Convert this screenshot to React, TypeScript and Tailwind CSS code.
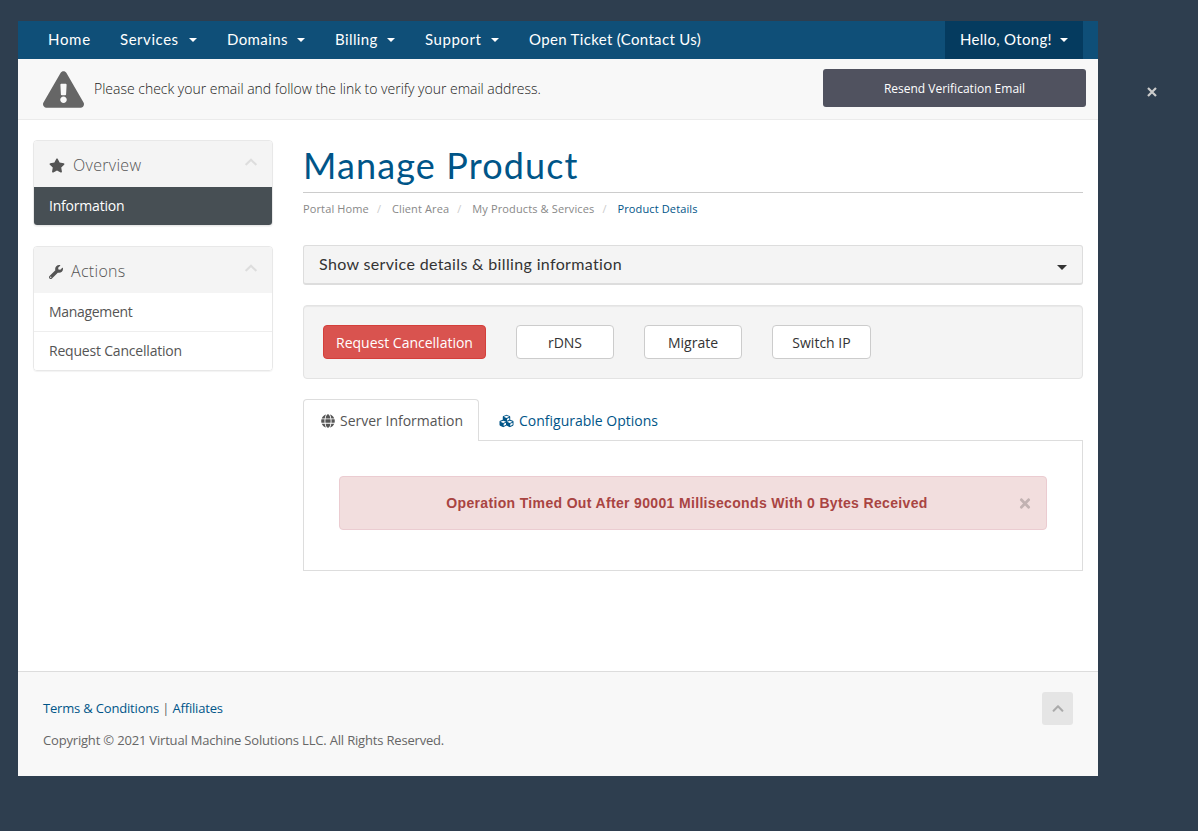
import { FaChevronUp, FaCubes, FaExclamationTriangle, FaGlobe, FaStar, FaTimes, FaWrench } from "react-icons/fa"

const navItems = [
    { label: "Home", dropdown: false, style: "w-[72px] tracking-[0.7px]" },
    { label: "Services", dropdown: true, style: "w-[107px] tracking-[0.55px]" },
    { label: "Domains", dropdown: true, style: "w-[108px] tracking-[0.4px]" },
    { label: "Billing", dropdown: true, style: "w-[90px] tracking-[0.4px]" },
    { label: "Support", dropdown: true, style: "w-[104px] tracking-[0.55px]" },
    { label: "Open Ticket (Contact Us)", dropdown: false, style: "w-[202px] tracking-[0.33px]" },
]

const sidebar = [
    {
        title: "Overview",
        icon: FaStar,
        iconStyle: "h-[15px] w-4",
        links: [{ label: "Information", style: "h-[38px] bg-[#474f54] text-white tracking-[-0.2px]" }],
    },
    {
        title: "Actions",
        icon: FaWrench,
        iconStyle: "h-[14px] w-[14px]",
        links: [
            { label: "Management", style: "h-[38px] bg-white text-[#555] tracking-[-0.32px]" },
            { label: "Request Cancellation", style: "h-[39px] border-t border-[#eee] bg-white text-[#555] tracking-[-0.2px]" },
        ],
    },
]

const breadcrumbs = ["Portal Home", "Client Area", "My Products & Services"]

const serviceActions = [
    { label: "Request Cancellation", style: "w-[163px] bg-[#d9534f] border-[#d43f3a] text-white" },
    { label: "rDNS", style: "w-[98px] bg-white border-[#ccc] text-[#333]" },
    { label: "Migrate", style: "w-[98px] bg-white border-[#ccc] text-[#333]" },
    { label: "Switch IP", style: "w-[99px] bg-white border-[#ccc] text-[#333]" },
]

function Caret() {
    return <span className="mt-px inline-block h-0 w-0 border-x-4 border-t-4 border-x-transparent border-t-current" />
}

function NavBar() {
    return (
        <nav className="flex h-[38px] bg-[#0f4f78] px-[15px] font-['Lato',sans-serif] text-[15px] leading-[36px] text-white">
            {navItems.map((item) => (
                <a key={item.label} className={`flex items-center justify-between whitespace-nowrap px-[15px] pb-px ${item.style}`}>
                    <span className="-mt-px">{item.label}</span>
                    {item.dropdown && <Caret />}
                </a>
            ))}
            <a className="ml-auto flex w-[138px] items-center justify-between whitespace-nowrap bg-[#053b5f] px-[15px] pb-px tracking-[0.3px]">
                <span className="-mt-px">Hello, Otong!</span>
                <Caret />
            </a>
        </nav>
    )
}

function VerifyBanner() {
    return (
        <div className="flex h-[61px] items-start border-b border-[#ebebeb] bg-[#f8f8f8] pl-[25px] pr-3 pt-[10px]">
            <FaExclamationTriangle className="mt-[2px] h-[37px] w-[41px] text-[#666]" />
            <p className="ml-[10px] mt-[10px] text-sm font-light tracking-[-0.01px] text-[#222]">
                Please check your email and follow the link to verify your email address.
            </p>
            <button className="ml-auto h-[38px] w-[263px] rounded-[3px] bg-[#50525f] pt-[2px] text-xs text-white">
                Resend Verification Email
            </button>
        </div>
    )
}

function Sidebar() {
    return (
        <aside className="flex w-[240px] flex-col gap-5">
            {sidebar.map((panel) => (
                <div key={panel.title} className="overflow-hidden rounded-[4px] border border-[#e8e8e8] shadow-[0_1px_1px_rgba(0,0,0,0.05)]">
                    <div className="flex h-[46px] items-center bg-[#f4f4f4] px-[15px] text-[#555]">
                        <panel.icon className={`mt-[3px] ${panel.iconStyle}`} />
                        <h3 className="ml-2 mt-[2px] text-base font-light tracking-[0.3px]">{panel.title}</h3>
                        <FaChevronUp className="ml-auto mb-[5px] h-[14px] w-[12px] text-[#ddd]" />
                    </div>
                    {panel.links.map((link) => (
                        <a key={link.label} className={`flex items-center px-[15px] text-sm ${link.style}`}>
                            {link.label}
                        </a>
                    ))}
                </div>
            ))}
        </aside>
    )
}

function ProductTabs() {
    return (
        <div className="mt-5">
            <div className="flex h-[42px] items-stretch text-sm">
                <a className="z-10 flex w-[176px] items-center rounded-t-[4px] border border-b-0 border-[#ddd] bg-white pl-[17px] text-[#555]">
                    <FaGlobe className="mr-[5px] h-[14px] w-[14px]" />
                    Server Information
                </a>
                <a className="flex items-center pl-5 pt-[2px] text-[#058]">
                    <FaCubes className="mr-[5px] h-[14px] w-[15px]" />
                    Configurable Options
                </a>
            </div>
            <div className="-mt-px h-[131px] border border-[#ddd] p-[35px]">
                <div className="flex h-[54px] items-center rounded-[4px] border border-[#ebccd1] bg-[#f2dede] pl-[15px] pr-[15px] text-[#a94442]">
                    <strong className="flex-1 text-center font-['Liberation_Sans',Arial,sans-serif] text-[14px] tracking-[0.34px]">
                        Operation Timed Out After 90001 Milliseconds With 0 Bytes Received
                    </strong>
                    <FaTimes className="h-[15px] w-[12px] text-[#c2b2b2]" />
                </div>
            </div>
        </div>
    )
}

function ProductPage() {
    return (
        <main className="w-[780px]">
            <h1 className="h-[53px] border-b border-[#ccc] font-['Lato',sans-serif] text-[36px] leading-[50px] tracking-[1.12px] text-[#058]">
                Manage Product
            </h1>
            <ol className="mt-2 flex h-[17px] items-center text-[11px] tracking-[0.13px] text-[#888]">
                {breadcrumbs.map((crumb) => (
                    <li key={crumb} className="flex">
                        {crumb}
                        <span className="w-[23px] pl-[8px] text-[#ccc]">/</span>
                    </li>
                ))}
                <li className="text-[#058]">Product Details</li>
            </ol>
            <div className="mt-[27px] flex h-10 items-center justify-between rounded-[3px] border border-b-2 border-[#ddd] bg-[#f4f4f4] px-[15px] font-['Lato',sans-serif] text-base text-[#333]">
                <span className="-mt-[2px] tracking-[0.35px]">Show service details &amp; billing information</span>
                <span className="mt-[6px] h-0 w-0 border-x-[5px] border-t-[5px] border-x-transparent border-t-[#333]" />
            </div>
            <div className="mt-5 flex h-[74px] items-start gap-[30px] rounded-[4px] border border-[#e3e3e3] bg-[#f4f4f4] p-[19px] shadow-[inset_0_1px_1px_rgba(0,0,0,0.05)]">
                {serviceActions.map((action) => (
                    <button key={action.label} className={`h-[34px] rounded-[4px] border pt-[2px] text-sm ${action.style}`}>
                        {action.label}
                    </button>
                ))}
            </div>
            <ProductTabs />
        </main>
    )
}

function Footer() {
    return (
        <footer className="flex h-[105px] justify-between border-t border-[#ddd] bg-[#f8f8f8] px-[25px] pt-5 text-[13px]">
            <div className="pt-[6px] tracking-[-0.18px]">
                <p className="leading-5 text-[#666]">
                    <a className="text-[#058]">Terms &amp; Conditions</a> | <a className="text-[#058]">Affiliates</a>
                </p>
                <p className="mt-3 leading-5 text-[#666]">
                    Copyright © 2021 Virtual Machine Solutions LLC. All Rights Reserved.
                </p>
            </div>
            <button className="flex h-[33px] w-[31px] items-center justify-center rounded-[3px] bg-[#e5e5e5]">
                <FaChevronUp className="h-[13px] w-[12px] text-[#aaa]" />
            </button>
        </footer>
    )
}

export default function App() {
    return (
        <div className="flex h-[831px] w-[1198px] items-start overflow-hidden bg-[#2e3e4f] pl-[18px] pt-[21px] font-['Open_Sans',sans-serif]">
            <div className="flex h-[755px] w-[1080px] flex-col bg-white">
                <NavBar />
                <VerifyBanner />
                <div className="flex flex-1 gap-[30px] px-[15px] pt-5">
                    <Sidebar />
                    <ProductPage />
                </div>
                <Footer />
            </div>
            {/* Dismiss button sits outside the page column */}
            <svg viewBox="0 0 10 10" className="ml-[49px] mt-[66px] h-[10px] w-[10px] text-[#ccc]">
                <path d="M1 1l8 8M9 1l-8 8" stroke="currentColor" strokeWidth="2.2" fill="none" />
            </svg>
        </div>
    )
}
